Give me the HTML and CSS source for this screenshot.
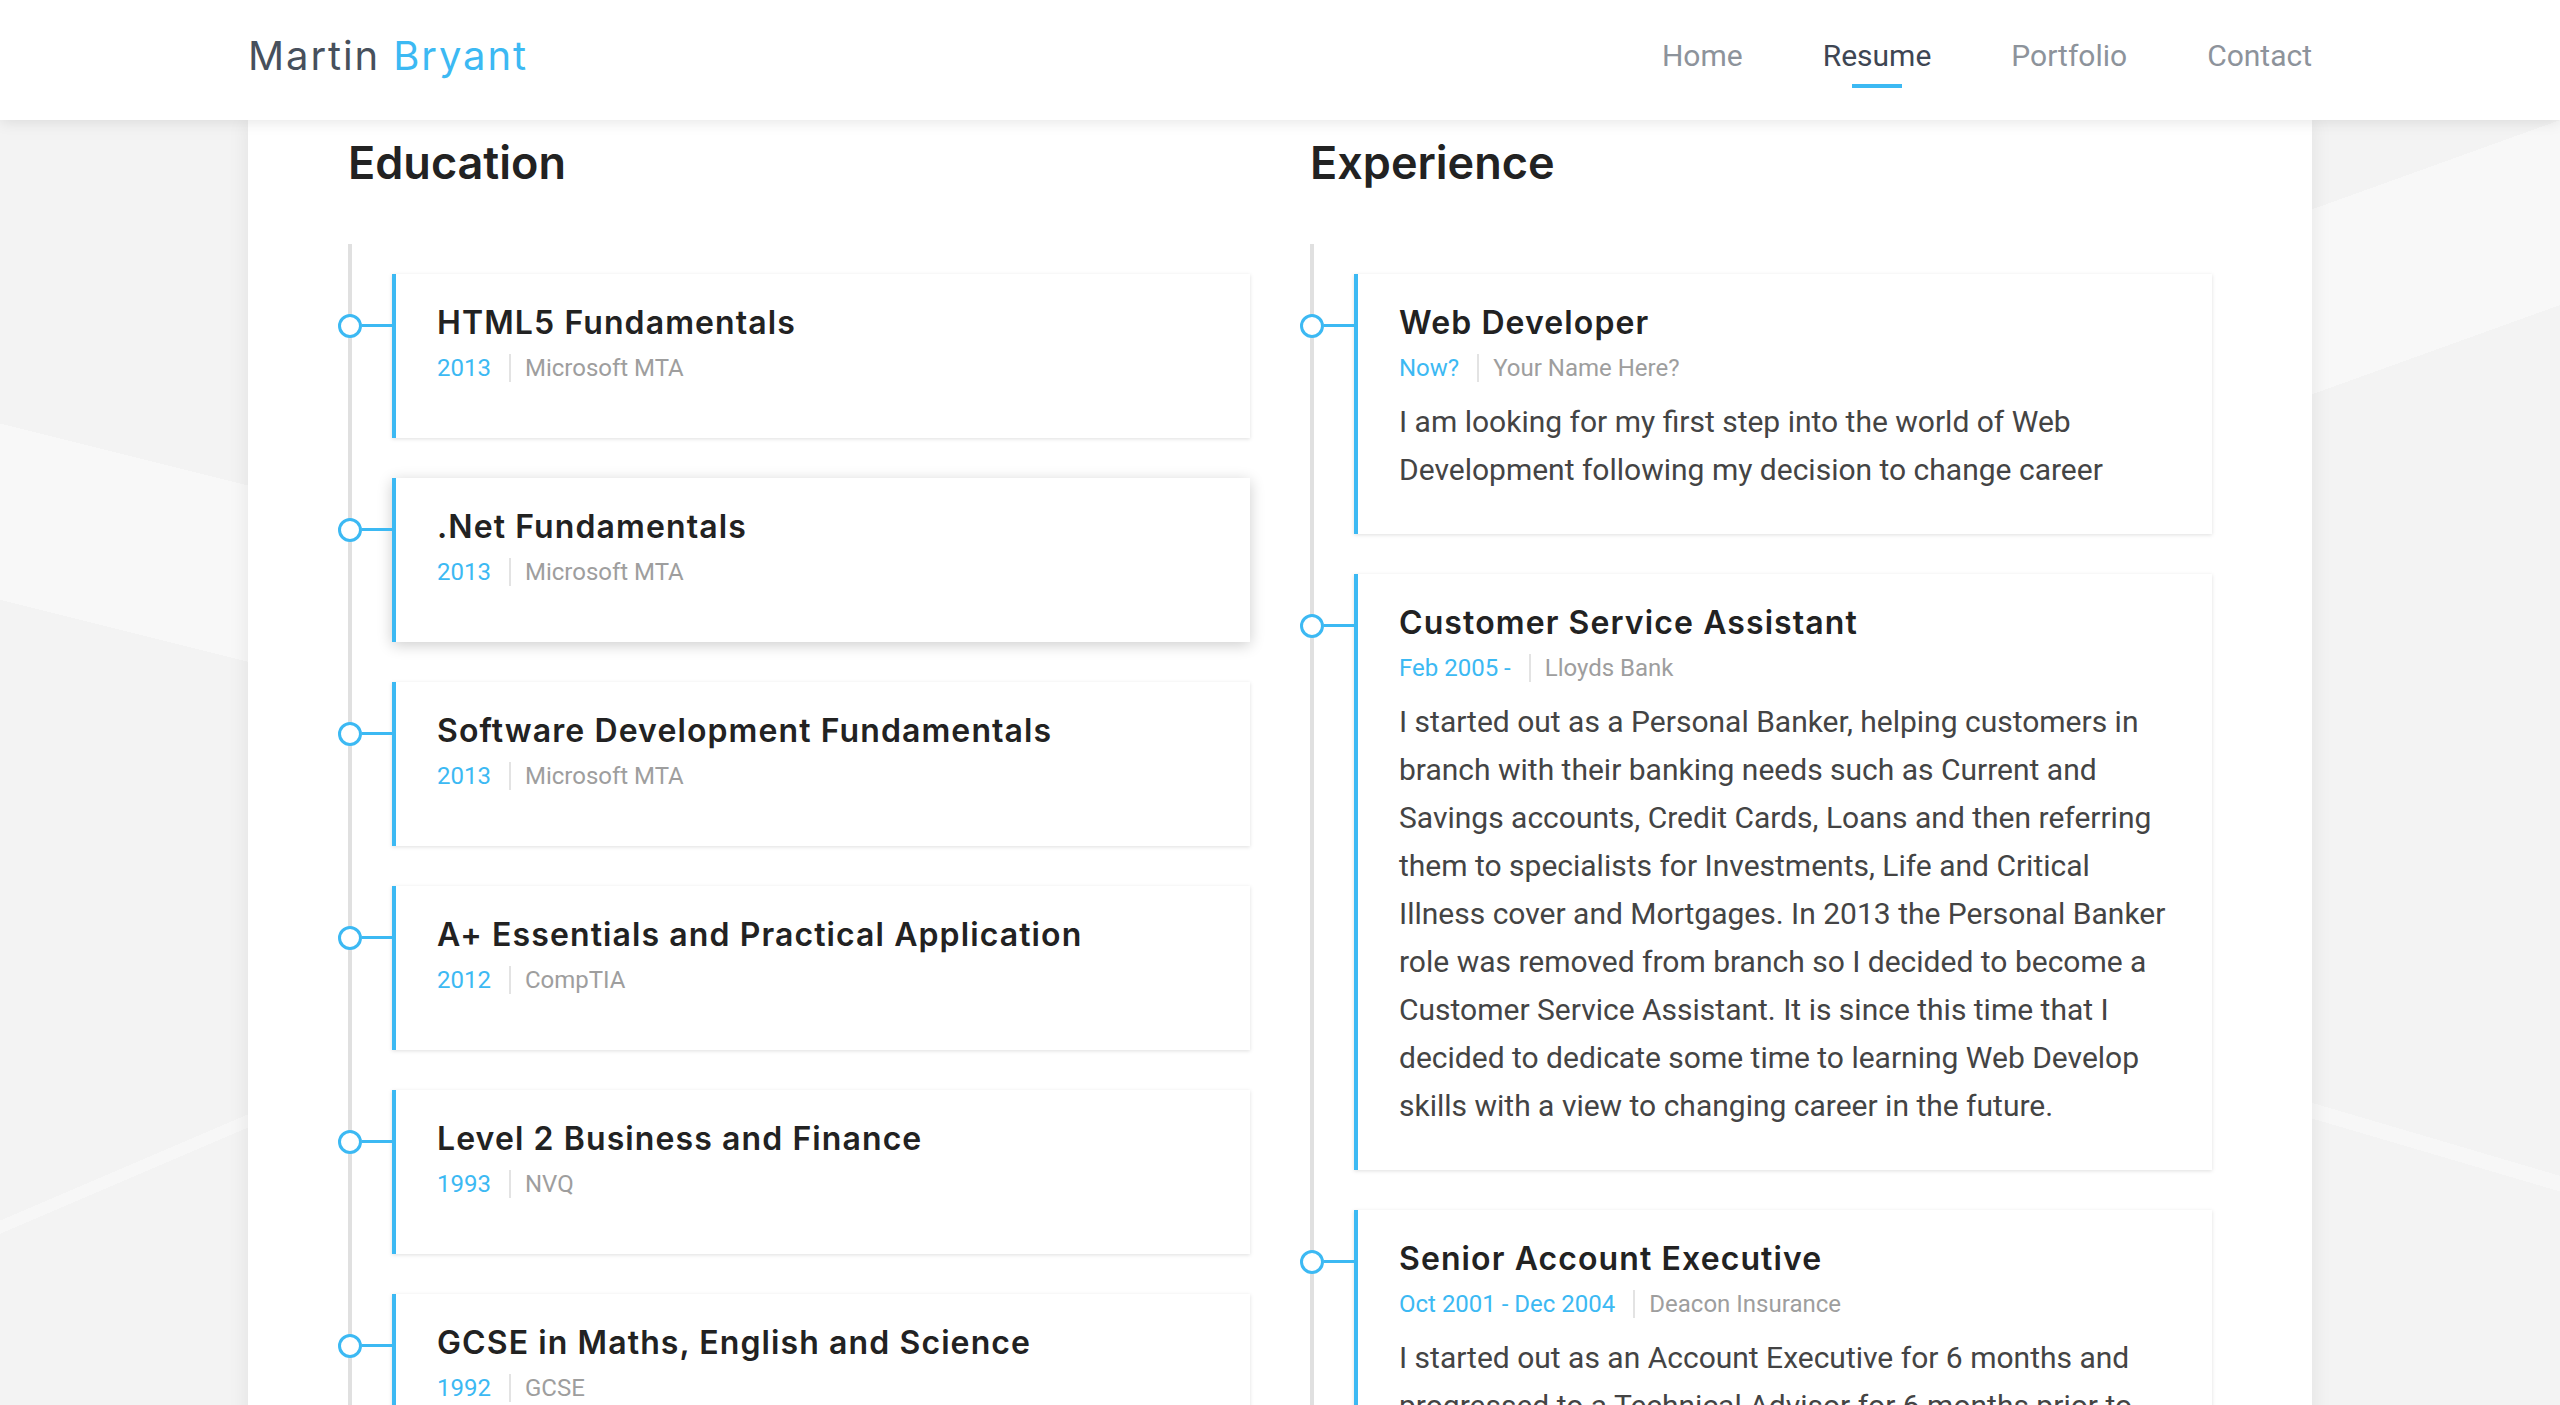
FILE: index.html
```html
<!DOCTYPE html>
<html lang="en">
<head>
<meta charset="utf-8">
<title>Martin Bryant - Resume</title>
<link rel="stylesheet" href="styles.css">
</head>
<body>
<header class="site-header">
  <div class="header-inner">
    <div class="logo">Martin <span class="logo-accent">Bryant</span></div>
    <nav class="nav">
      <a href="#">Home</a>
      <a href="#" class="active">Resume</a>
      <a href="#">Portfolio</a>
      <a href="#">Contact</a>
    </nav>
  </div>
</header>

<main class="panel">
  <section class="column">
    <h2 class="col-title">Education</h2>
    <div class="timeline">
      <article class="card">
        <h3 class="card-title">HTML5 Fundamentals</h3>
        <div class="card-meta"><span class="date">2013</span><span class="org">Microsoft MTA</span></div>
      </article>
      <article class="card is-raised">
        <h3 class="card-title">.Net Fundamentals</h3>
        <div class="card-meta"><span class="date">2013</span><span class="org">Microsoft MTA</span></div>
      </article>
      <article class="card">
        <h3 class="card-title">Software Development Fundamentals</h3>
        <div class="card-meta"><span class="date">2013</span><span class="org">Microsoft MTA</span></div>
      </article>
      <article class="card">
        <h3 class="card-title">A+ Essentials and Practical Application</h3>
        <div class="card-meta"><span class="date">2012</span><span class="org">CompTIA</span></div>
      </article>
      <article class="card">
        <h3 class="card-title">Level 2 Business and Finance</h3>
        <div class="card-meta"><span class="date">1993</span><span class="org">NVQ</span></div>
      </article>
      <article class="card">
        <h3 class="card-title">GCSE in Maths, English and Science</h3>
        <div class="card-meta"><span class="date">1992</span><span class="org">GCSE</span></div>
      </article>
    </div>
  </section>

  <section class="column">
    <h2 class="col-title">Experience</h2>
    <div class="timeline">
      <article class="card">
        <h3 class="card-title">Web Developer</h3>
        <div class="card-meta"><span class="date">Now?</span><span class="org">Your Name Here?</span></div>
        <p class="card-text">I am looking for my first step into the world of Web Development following my decision to change career</p>
      </article>
      <article class="card">
        <h3 class="card-title">Customer Service Assistant</h3>
        <div class="card-meta"><span class="date">Feb 2005 -</span><span class="org">Lloyds Bank</span></div>
        <p class="card-text">I started out as a Personal Banker, helping customers in branch with their banking needs such as Current and Savings accounts, Credit Cards, Loans and then referring them to specialists for Investments, Life and Critical Illness cover and Mortgages. In 2013 the Personal Banker role was removed from branch so I decided to become a Customer Service Assistant. It is since this time that I decided to dedicate some time to learning Web Develop skills with a view to changing career in the future.</p>
      </article>
      <article class="card">
        <h3 class="card-title">Senior Account Executive</h3>
        <div class="card-meta"><span class="date">Oct 2001 - Dec 2004</span><span class="org">Deacon Insurance</span></div>
        <p class="card-text">I started out as an Account Executive for 6 months and progressed to a Technical Advisor for 6 months prior to becoming a Senior Account Executive, looking after commercial insurance clients.</p>
      </article>
    </div>
  </section>
</main>
</body>
</html>
```

FILE: styles.css
```css
html {
  background-color: #f3f3f3;
  background-image:
    linear-gradient(194deg, rgba(248,248,248,0) 471px, #f8f8f8 471px, #f8f8f8 642px, rgba(248,248,248,0) 642px),
    linear-gradient(156.8deg, rgba(248,248,248,0) 1122px, #f7f7f7 1122px, #f7f7f7 1134px, rgba(248,248,248,0) 1134px),
    linear-gradient(160.2deg, rgba(248,248,248,0) 197px, #f8f8f8 197px, #f8f8f8 371px, rgba(248,248,248,0) 371px),
    linear-gradient(196.4deg, rgba(248,248,248,0) 1128px, #f7f7f7 1128px, #f7f7f7 1143px, rgba(248,248,248,0) 1143px);
  background-size: 248px 100%;
  background-repeat: no-repeat;
  background-position: left top, left top, right top, right top;
  background-attachment: fixed;
}

body {
  margin: 0;
  font-family: Roboto, "Liberation Sans", sans-serif;
  color: #444;
}

/* Header */
.site-header {
  position: relative;
  z-index: 2;
  height: 120px;
  background: #fff;
  box-shadow: 0 2px 14px rgba(0, 0, 0, 0.1);
}

.header-inner {
  width: 2064px;
  margin: 0 auto;
  display: flex;
  justify-content: space-between;
  align-items: flex-start;
}

.logo {
  font-family: Inter, "Noto Sans", sans-serif;
  font-weight: 400;
  font-size: 40px;
  line-height: 48px;
  padding-top: 32px;
  letter-spacing: 1.9px;
  color: #47505c;
}

.logo-accent {
  color: #3cb9f3;
}

.nav {
  display: flex;
  gap: 80px;
  padding-top: 38px;
}

.nav a {
  display: flex;
  flex-direction: column;
  align-items: center;
  font-size: 30px;
  line-height: 36px;
  color: #8d939b;
  text-decoration: none;
}

.nav a::after {
  content: "";
  width: 50px;
  height: 4px;
  margin-top: 10px;
  background: transparent;
}

.nav a.active {
  color: #3e4653;
}

.nav a.active::after {
  background: #3cb9f3;
}

/* Panel */
.panel {
  position: relative;
  z-index: 1;
  box-sizing: border-box;
  width: 2064px;
  margin: 0 auto;
  padding: 16px 100px 80px;
  background: #fff;
  box-shadow: 0 0 20px rgba(0, 0, 0, 0.08);
  display: grid;
  grid-template-columns: 1fr 1fr;
  column-gap: 60px;
}

.col-title {
  margin: 0 0 54px;
  font-family: Inter, "Noto Sans", sans-serif;
  font-weight: 600;
  font-size: 45px;
  line-height: 54px;
  color: #222;
}

.timeline {
  border-left: 4px solid #e0e0e0;
  padding: 30px 0 0 40px;
  display: flex;
  flex-direction: column;
  gap: 40px;
}

.card {
  position: relative;
  background: #fff;
  border-left: 4px solid #3cb9f3;
  padding: 29px 40px 40px 41px;
  box-shadow: 0 1px 4px rgba(0, 0, 0, 0.13);
}

.card.is-raised {
  box-shadow: 0 3px 14px rgba(0, 0, 0, 0.2);
}

.card::before {
  content: "";
  position: absolute;
  left: -34px;
  top: 50px;
  width: 30px;
  height: 3px;
  background: #3cb9f3;
}

.card::after {
  content: "";
  position: absolute;
  left: -58px;
  top: 40px;
  width: 18px;
  height: 18px;
  border: 3px solid #3cb9f3;
  border-radius: 50%;
  background: #fff;
}

.card-title {
  margin: 0;
  font-family: Inter, "Noto Sans", sans-serif;
  font-weight: 600;
  font-size: 32px;
  line-height: 40px;
  letter-spacing: 1.1px;
  color: #222;
}

.card-meta {
  margin: 7px 0 12px;
  display: flex;
  align-items: center;
  font-size: 24px;
  line-height: 36px;
}

.date {
  color: #3cb9f3;
  padding-right: 18px;
}

.org {
  color: #9e9e9e;
  border-left: 2px solid #e3e3e3;
  padding-left: 14px;
  line-height: 28px;
}

.card-text {
  margin: 0;
  font-size: 30px;
  line-height: 48px;
  color: #444;
}
```
